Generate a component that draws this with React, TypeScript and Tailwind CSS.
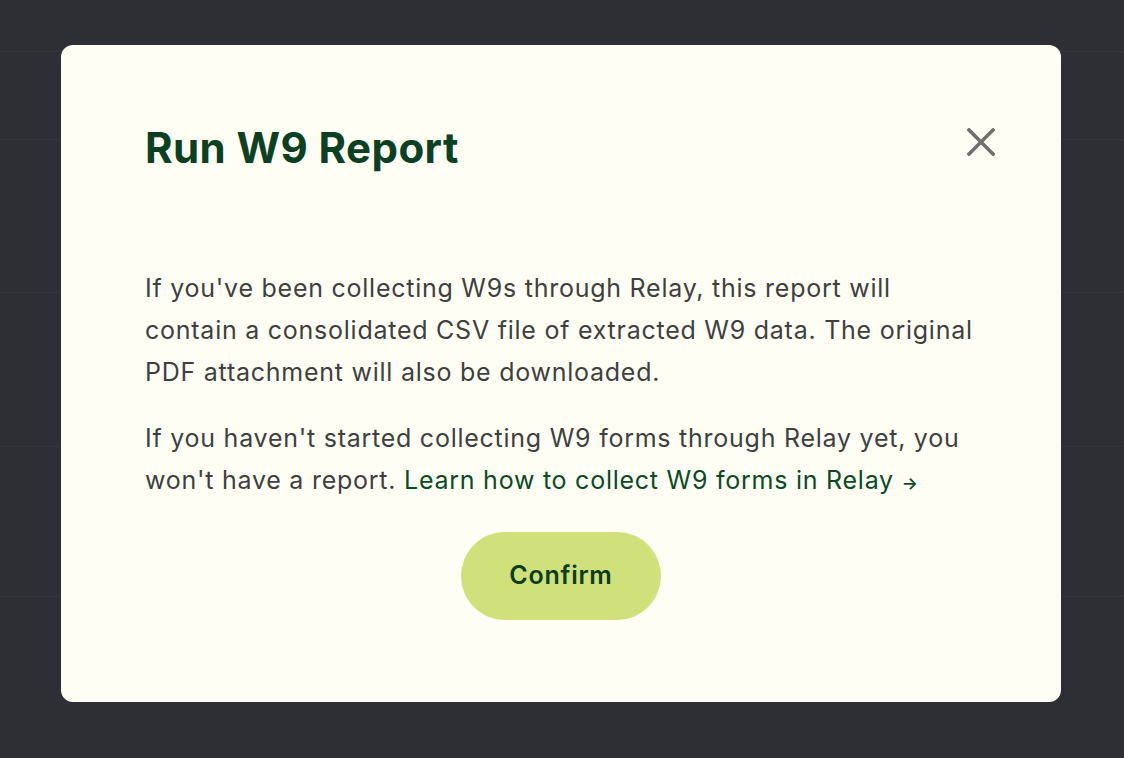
export default function App() {
  return (
    <div className="relative h-[758px] w-[1124px] overflow-hidden bg-[#2e2f34] font-['Inter',sans-serif]">
      {/* faint table rows behind the overlay */}
      <div className="flex flex-col">
        <div className="h-[52px] border-b border-[#34353a]" />
        <div className="h-[88px] border-b border-[#34353a]" />
        <div className="h-[153px] border-b border-[#34353a]" />
        <div className="h-[154px] border-b border-[#34353a]" />
        <div className="h-[150px] border-b border-[#34353a]" />
      </div>

      <div className="absolute left-[61px] top-[45px] flex h-[657px] w-[1000px] flex-col rounded-[12px] bg-[#fefef5] px-[84px] pt-[79px]">
        <div className="flex items-start justify-between">
          <h2 className="text-[42px] font-bold leading-[48px] tracking-[0.01em] text-[#0b4122]">
            Run W9 Report
          </h2>
          <button className="mr-[-18px] mt-[4px] text-[#6f6f6f]" aria-label="Close">
            <svg width="28" height="28" viewBox="0 0 28 28" fill="none" stroke="currentColor" strokeWidth="3.6" strokeLinecap="square">
              <path d="M2 2L26 26M26 2L2 26" />
            </svg>
          </button>
        </div>

        <div className="mt-[95px] text-[25px] leading-[42px] tracking-[0.03em] text-[#3f3f3f]">
          <p className="whitespace-nowrap">
            If you've been collecting W9s through Relay, this report will
            <br />
            contain a consolidated CSV file of extracted W9 data. The original
            <br />
            PDF attachment will also be downloaded.
          </p>
          <p className="mt-[24px] whitespace-nowrap">
            If you haven't started collecting W9 forms through Relay yet, you
            <br />
            won't have a report.{" "}
            <a href="#" className="text-[#0b4a25]">
              Learn how to collect W9 forms in Relay <span className="text-[17px] font-semibold">→</span>
            </a>
          </p>
        </div>

        <div className="mt-[28px] flex justify-center">
          <button className="h-[88px] w-[200px] rounded-full bg-[#d0e07a] text-[25px] font-semibold tracking-[0.03em] text-[#0b3d1e]">
            Confirm
          </button>
        </div>
      </div>
    </div>
  );
}
